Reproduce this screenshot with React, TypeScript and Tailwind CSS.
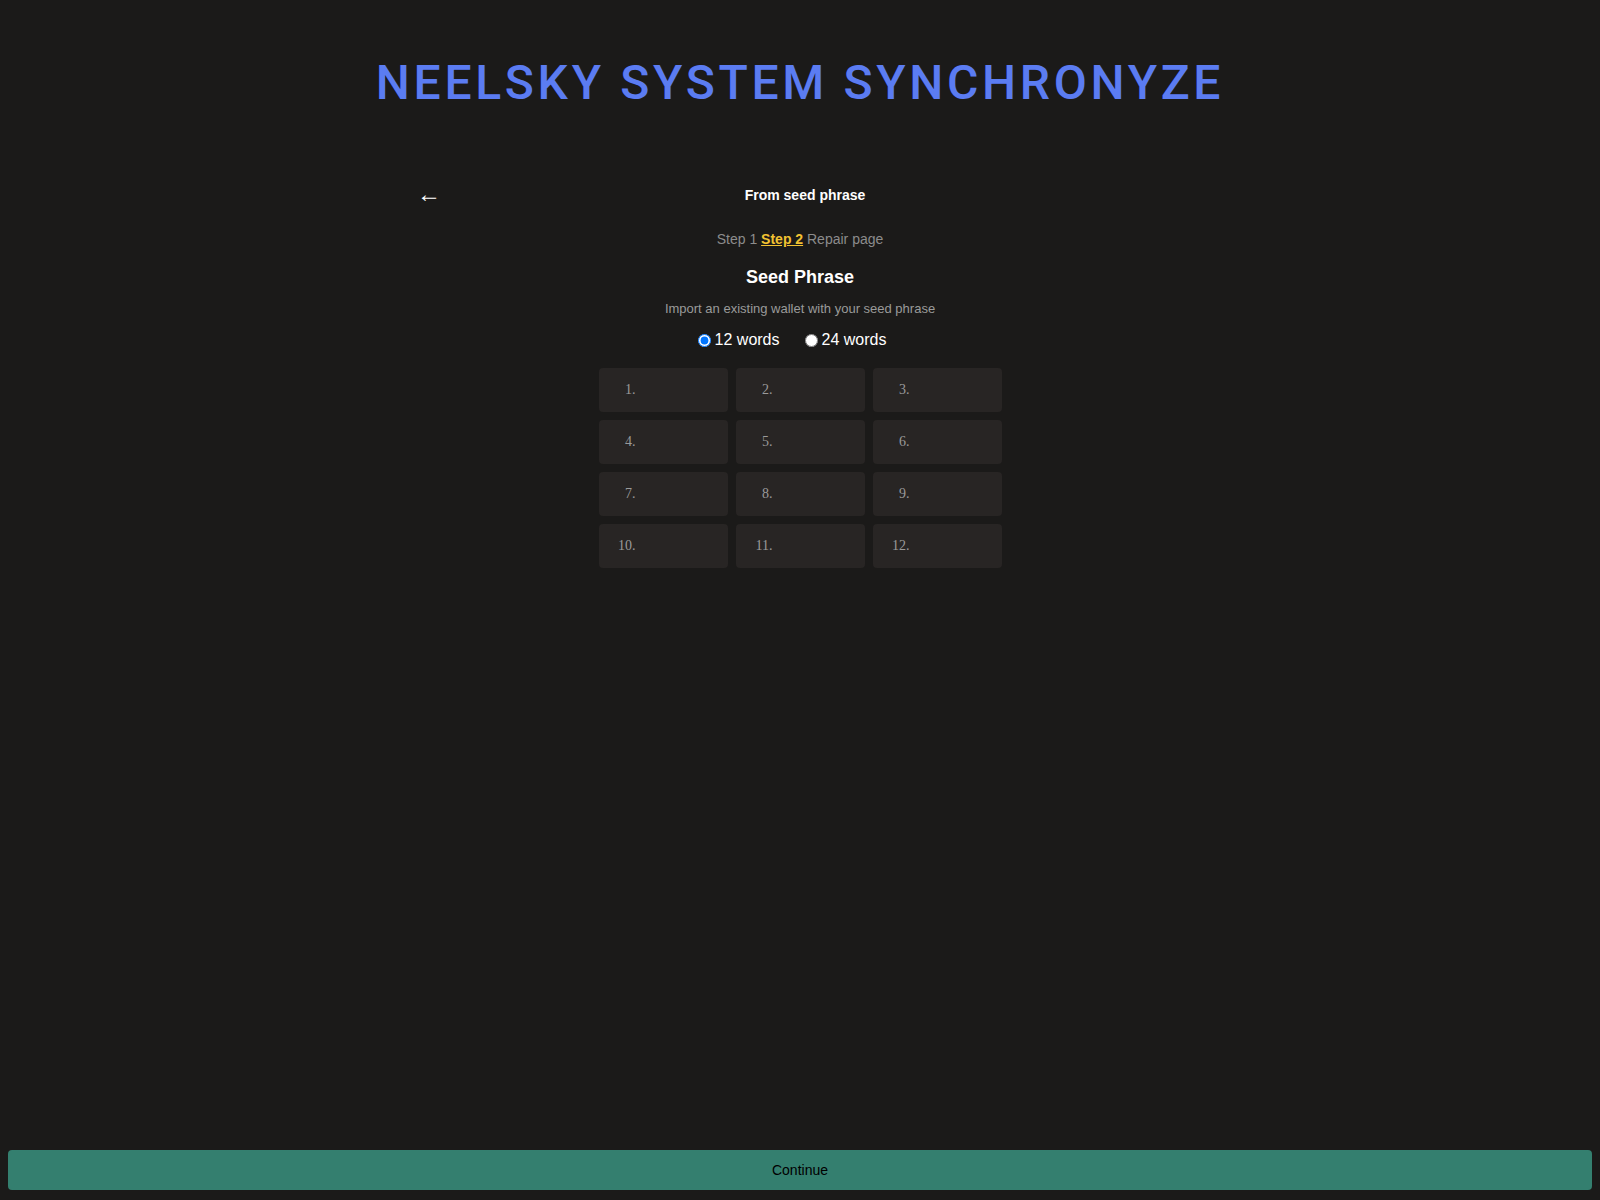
import React, { useState } from "react";

export default function App() {
  const [count, setCount] = useState<12 | 24>(12);
  const words = Array.from({ length: count }, (_, i) => i + 1);
  return (
    <div
      className="min-h-screen flex flex-col bg-[#1b1a19] text-white"
      style={{ fontFamily: '"Liberation Sans", Arial, sans-serif' }}
    >
      <h1
        className="mt-[55px] text-center text-[48px] leading-[56px] font-medium tracking-[3.7px] text-[#5b7cf2]"
        style={{ fontFamily: 'Roboto, "Liberation Sans", sans-serif' }}
      >
        NEELSKY SYSTEM SYNCHRONYZE
      </h1>

      <div className="mt-[72px] w-[800px] mx-auto flex items-center h-6">
        <button className="ml-[17px] w-[23px] text-[24px] leading-6 text-white text-left -mt-[2px]">
          ←
        </button>
        <div className="flex-1 text-center pr-[30px] text-[14px] font-bold leading-6">
          From seed phrase
        </div>
      </div>

      <div className="mt-[22px] text-center text-[14px] leading-5 text-[#8c8c8c]">
        Step 1{" "}
        <span className="font-bold text-[#f2c232] underline">Step 2</span>{" "}
        Repair page
      </div>

      <div className="mt-[14px] text-center text-[18px] font-bold leading-7">
        Seed Phrase
      </div>

      <div className="mt-[10px] text-center text-[13px] leading-4 text-[#9a9a9a]">
        Import an existing wallet with your seed phrase
      </div>

      <div className="mt-[11px] flex justify-center items-center h-6 text-[16px] pr-[16px]">
        <label className="flex items-center">
          <input
            type="radio"
            name="words"
            checked={count === 12}
            onChange={() => setCount(12)}
            className="m-0 mr-[4px] w-[13px] h-[13px]"
          />
          12 words
        </label>
        <label className="flex items-center ml-[25px]">
          <input
            type="radio"
            name="words"
            checked={count === 24}
            onChange={() => setCount(24)}
            className="m-0 mr-[4px] w-[13px] h-[13px]"
          />
          24 words
        </label>
      </div>

      <div className="mt-[16px] mx-auto grid grid-cols-[129px_129px_129px] gap-2">
        {words.map((n) => (
          <div
            key={n}
            className="h-[44px] rounded-[4px] bg-[#282524] flex items-center"
          >
            <span
              className="w-[37px] text-right text-[14px] text-[#9a9a9a] shrink-0 -mt-[2px]"
              style={{ fontFamily: '"Liberation Serif", "Times New Roman", serif' }}
            >
              {n}.
            </span>
            <input
              type="text"
              className="min-w-0 flex-1 bg-transparent outline-none text-white text-[14px] px-1"
            />
          </div>
        ))}
      </div>

      <button className="mt-auto mx-2 mb-[10px] h-10 rounded-[4px] bg-[#347f6f] text-[14px] text-black">
        Continue
      </button>
    </div>
  );
}
